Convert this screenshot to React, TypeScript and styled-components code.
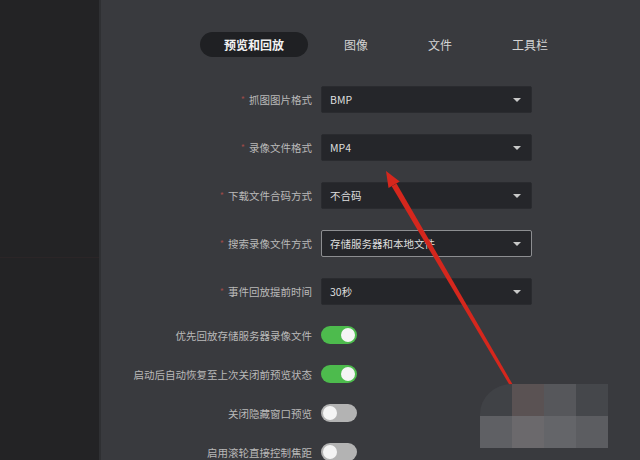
import React from "react"
import styled, { createGlobalStyle } from "styled-components"

const GlobalStyle = createGlobalStyle`
  html, body {
    margin: 0;
    padding: 0;
    width: 640px;
    height: 460px;
    overflow: hidden;
    background: #393a3e;
  }
  * {
    box-sizing: border-box;
  }
`

const FONT = `"Noto Sans CJK SC", "Noto Sans", "Liberation Sans", sans-serif`

const selects = [
  { label: "抓图图片格式", value: "BMP" },
  { label: "录像文件格式", value: "MP4" },
  { label: "下载文件合码方式", value: "不合码" },
  { label: "搜索录像文件方式", value: "存储服务器和本地文件", focused: true },
  { label: "事件回放提前时间", value: "30秒" },
]

const toggles = [
  { label: "优先回放存储服务器录像文件", on: true },
  { label: "启动后自动恢复至上次关闭前预览状态", on: true },
  { label: "关闭隐藏窗口预览", on: false },
  { label: "启用滚轮直接控制焦距", on: false },
]

const tabs = ["预览和回放", "图像", "文件", "工具栏"]

const mosaic = [
  "#404246", "#5a5253", "#56575b", "#45474b",
  "#5f6064", "#6b696c", "#646569", "#5c5d61",
]

export default function App() {
  return (
    <Root>
      <GlobalStyle />
      <Sidebar>
        <SidebarTop />
      </Sidebar>
      <Main>
        <Tabs>
          {tabs.map((t, i) => (
            <Tab key={t} active={i === 0}>
              {t}
            </Tab>
          ))}
        </Tabs>
        <Form>
          {selects.map((s) => (
            <SelectRow key={s.label}>
              <Label>
                <Star>*</Star>
                {s.label}
              </Label>
              <Select focused={!!s.focused}>
                <span>{s.value}</span>
                <Caret />
              </Select>
            </SelectRow>
          ))}
          <ToggleList>
            {toggles.map((t) => (
              <ToggleRow key={t.label}>
                <Label>{t.label}</Label>
                <Switch on={t.on}>
                  <Knob on={t.on} />
                </Switch>
              </ToggleRow>
            ))}
          </ToggleList>
        </Form>
      </Main>

      <Arrow viewBox="0 0 640 460" width="640" height="460">
        <polygon
          points="514.3,387.3 511.7,388.7 391.7,186.3 396.5,183.4"
          fill="#d5271d"
        />
        <polygon points="386,171 399.7,181.5 388.5,188.1" fill="#d5271d" />
      </Arrow>

      <Mosaic>
        {mosaic.map((c, i) => (
          <Cell key={i} color={c} rounded={i === 0} />
        ))}
      </Mosaic>
    </Root>
  )
}

const Root = styled.div`
  position: relative;
  display: flex;
  width: 640px;
  height: 460px;
  overflow: hidden;
  font-family: ${FONT};
`

const Sidebar = styled.div`
  width: 101px;
  flex: none;
  background: #232325;
  border-right: 2px solid #2f3033;
`

const SidebarTop = styled.div`
  height: 258px;
  border-bottom: 1px solid #2b2527;
`

const Main = styled.div`
  flex: 1;
  padding-top: 32px;
`

const Tabs = styled.div`
  display: flex;
  gap: 12px;
  padding-left: 99px;
`

const Tab = styled.div<{ active: boolean }>`
  height: 25px;
  padding: 0 24px;
  border-radius: 13px;
  display: flex;
  align-items: center;
  font-size: 12px;
  font-weight: ${(p) => (p.active ? 700 : 400)};
  color: ${(p) => (p.active ? "#f2f2f2" : "#d4d4d4")};
  background: ${(p) => (p.active ? "#1f2023" : "transparent")};
`

const Form = styled.div`
  margin-top: 29px;
  display: flex;
  flex-direction: column;
  gap: 21px;
`

const SelectRow = styled.div`
  display: grid;
  grid-template-columns: 211px 211px;
  column-gap: 9px;
  align-items: center;
`

const ToggleList = styled.div`
  margin-top: 0;
  display: flex;
  flex-direction: column;
  gap: 21px;
`

const ToggleRow = styled(SelectRow)``

const Label = styled.div`
  text-align: right;
  font-size: 10.5px;
  color: #b9b9b9;
  white-space: nowrap;
`

const Star = styled.span`
  color: #9c4a48;
  font-size: 9px;
  margin-right: 4px;
  vertical-align: 1px;
`

const Select = styled.div<{ focused: boolean }>`
  height: 27px;
  display: flex;
  align-items: center;
  justify-content: space-between;
  padding: 0 10px 0 8px;
  background: #25262a;
  border: 1px solid ${(p) => (p.focused ? "#8d8e91" : "#2a2b2f")};
  border-radius: 2px;
  font-size: 10.5px;
  color: #dedede;
`

const Caret = styled.i`
  width: 0;
  height: 0;
  border-left: 4px solid transparent;
  border-right: 4px solid transparent;
  border-top: 4px solid #c9c9c9;
`

const Switch = styled.div<{ on: boolean }>`
  width: 36px;
  height: 18px;
  border-radius: 9px;
  background: ${(p) => (p.on ? "#4dbb4d" : "#b3b3b3")};
  display: flex;
  align-items: center;
  justify-content: ${(p) => (p.on ? "flex-end" : "flex-start")};
  padding: 0 2px;
`

const Knob = styled.div<{ on: boolean }>`
  width: 14px;
  height: 14px;
  border-radius: 50%;
  background: #f4f4f4;
`

const Arrow = styled.svg`
  position: absolute;
  left: 0;
  top: 0;
  pointer-events: none;
`

const Mosaic = styled.div`
  position: absolute;
  left: 480px;
  top: 384px;
  display: grid;
  grid-template-columns: repeat(4, 32px);
  grid-auto-rows: 32px;
`

const Cell = styled.div<{ color: string; rounded: boolean }>`
  background: ${(p) => p.color};
  border-top-left-radius: ${(p) => (p.rounded ? "32px 30px" : "0")};
`
